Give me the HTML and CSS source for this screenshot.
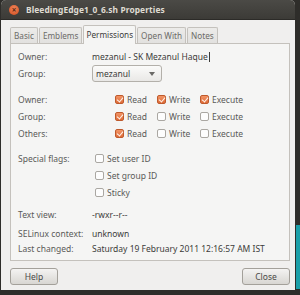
FILE: index.html
```html
<!DOCTYPE html>
<html>
<head>
    <meta charset="UTF-8">
    <title>BleedingEdge1_0_6.sh Properties</title>
    <link rel="stylesheet" href="styles.css">
</head>
<body>
    <div class="window">
        <div class="titlebar">
            <span class="close-dot"><span class="x">×</span></span>
            <span class="title">BleedingEdge1_0_6.sh Properties</span>
        </div>
        <div class="content">
            <div class="tabs">
                <div class="tab">Basic</div>
                <div class="tab">Emblems</div>
                <div class="tab active">Permissions</div>
                <div class="tab">Open With</div>
                <div class="tab">Notes</div>
            </div>
            <div class="panel">
                <div class="row">
                    <span class="label">Owner:</span>
                    <span class="value">mezanul - SK Mezanul Haque<span class="caret"></span></span>
                </div>
                <div class="row">
                    <span class="label">Group:</span>
                    <div class="combo"><span>mezanul</span><span class="arrow"></span></div>
                </div>

                <div class="perms">
                    <div class="row">
                        <span class="label">Owner:</span>
                        <div class="checks">
                            <span class="check read"><i class="box on"></i>Read</span>
                            <span class="check write"><i class="box on"></i>Write</span>
                            <span class="check"><i class="box on"></i>Execute</span>
                        </div>
                    </div>
                    <div class="row">
                        <span class="label">Group:</span>
                        <div class="checks">
                            <span class="check read"><i class="box on"></i>Read</span>
                            <span class="check write"><i class="box"></i>Write</span>
                            <span class="check"><i class="box"></i>Execute</span>
                        </div>
                    </div>
                    <div class="row">
                        <span class="label">Others:</span>
                        <div class="checks">
                            <span class="check read"><i class="box on"></i>Read</span>
                            <span class="check write"><i class="box"></i>Write</span>
                            <span class="check"><i class="box"></i>Execute</span>
                        </div>
                    </div>
                </div>

                <div class="flags">
                    <div class="row">
                        <span class="label">Special flags:</span>
                        <span class="check flag"><i class="box"></i>Set user ID</span>
                    </div>
                    <div class="row">
                        <span class="label"></span>
                        <span class="check flag"><i class="box"></i>Set group ID</span>
                    </div>
                    <div class="row">
                        <span class="label"></span>
                        <span class="check flag"><i class="box"></i>Sticky</span>
                    </div>
                </div>

                <div class="info">
                    <div class="row short">
                        <span class="label">Text view:</span>
                        <span class="value">-rwxr--r--</span>
                    </div>
                    <div class="row short gap">
                        <span class="label">SELinux context:</span>
                        <span class="value">unknown</span>
                    </div>
                    <div class="row short">
                        <span class="label">Last changed:</span>
                        <span class="value">Saturday 19 February 2011 12:16:57 AM IST</span>
                    </div>
                </div>
            </div>
            <div class="buttons">
                <div class="btn">Help</div>
                <div class="btn">Close</div>
            </div>
        </div>
    </div>
</body>
</html>
```

FILE: styles.css
```css
* {
    margin: 0;
    padding: 0;
    box-sizing: border-box;
}
body {
    width: 300px;
    height: 295px;
    overflow: hidden;
    background: linear-gradient(#1b9fa8, #1b9fa8) no-repeat 296px 225px / 4px 64px, #2e2d2a;
    font-family: "Noto Sans", "Open Sans", sans-serif;
    font-size: 8.5px;
    color: #4a4a48;
}
.window {
    width: 294px;
    height: 290px;
    margin-left: 1px;
    border-radius: 5px 5px 0 0;
    background: #f0efee;
    overflow: hidden;
    display: flex;
    flex-direction: column;
}
.titlebar {
    height: 20px;
    flex: none;
    display: flex;
    align-items: center;
    padding-left: 8px;
    background: linear-gradient(#4b4a46, #3c3b37);
    border-bottom: 1px solid #2c2b28;
}
.close-dot {
    width: 10px;
    height: 10px;
    border-radius: 50%;
    background: radial-gradient(circle at 50% 35%, #f08559, #d24d1f);
    display: flex;
    align-items: center;
    justify-content: center;
    margin-right: 7px;
}
.close-dot .x {
    font-size: 8px;
    line-height: 8px;
    color: #5a2a16;
    font-weight: bold;
}
.title {
    color: #dfdbd2;
    font-weight: bold;
    font-size: 8.4px;
    letter-spacing: 0.1px;
}
.content {
    flex: 1;
    padding: 5px 5px 0 9px;
    display: flex;
    flex-direction: column;
}
.tabs {
    display: flex;
    align-items: flex-end;
    height: 18px;
    gap: 1px;
    position: relative;
    z-index: 1;
    font-size: 8.2px;
}
.tab {
    height: 16px;
    padding: 0 3px;
    line-height: 15px;
    border: 1px solid #c4c1bc;
    border-bottom: none;
    border-radius: 2px 2px 0 0;
    background: linear-gradient(#ecebe9, #e2e1df);
    color: #6c6b68;
}
.tab.active {
    height: 19px;
    line-height: 17px;
    padding: 0 2px;
    background: #f5f5f4;
    color: #3c3c3a;
    margin-bottom: -1px;
}
.panel {
    width: 280px;
    height: 218px;
    border: 1px solid #c4c1bc;
    background: #f5f5f4;
    padding: 4px 0 0 7px;
}
.row {
    display: flex;
    align-items: center;
    height: 17px;
}
.row.short {
    height: 15px;
}
.row.gap {
    margin-top: 4px;
}
.label {
    width: 74px;
    flex: none;
    color: #5a5a58;
}
.value {
    color: #3c3c3a;
    display: flex;
    align-items: center;
}
.caret {
    width: 1px;
    height: 10px;
    background: #3c3c3a;
    margin-left: 1px;
}
.combo {
    width: 70px;
    height: 17px;
    border: 1px solid #b3b0aa;
    border-radius: 3px;
    background: linear-gradient(#fbfbfa, #e9e8e6);
    display: flex;
    align-items: center;
    justify-content: space-between;
    padding: 0 6px 0 3px;
    color: #3c3c3a;
}
.arrow {
    width: 0;
    height: 0;
    border-left: 3px solid transparent;
    border-right: 3px solid transparent;
    border-top: 4px solid #6a6966;
}
.perms {
    margin-top: 9px;
}
.checks {
    display: flex;
    padding-left: 23px;
}
.check {
    display: flex;
    align-items: center;
    color: #5a5a58;
}
.check.read {
    width: 42px;
}
.check.write {
    width: 43px;
}
.check.flag {
    padding-left: 3px;
}
.box {
    width: 9px;
    height: 9px;
    border: 1px solid #aaa7a2;
    border-radius: 2px;
    background: #fdfdfd;
    margin-right: 3px;
    flex: none;
    position: relative;
}
.box.on {
    border-color: #bf5a2c;
    background: linear-gradient(#f29465, #de6c39);
}
.box.on::after {
    content: "";
    position: absolute;
    left: 2px;
    top: 0px;
    width: 3px;
    height: 5px;
    border: solid #fff4ec;
    border-width: 0 1.5px 1.5px 0;
    transform: rotate(40deg);
}
.flags {
    margin-top: 8px;
}
.info {
    margin-top: 6px;
}
.buttons {
    display: flex;
    justify-content: space-between;
    margin-top: 7px;
    width: 280px;
}
.btn {
    width: 48px;
    height: 17px;
    border: 1px solid #a3a09a;
    border-radius: 3px;
    background: linear-gradient(#f4f3f2, #d8d6d2);
    display: flex;
    align-items: center;
    justify-content: center;
    color: #4a4a48;
}
```
